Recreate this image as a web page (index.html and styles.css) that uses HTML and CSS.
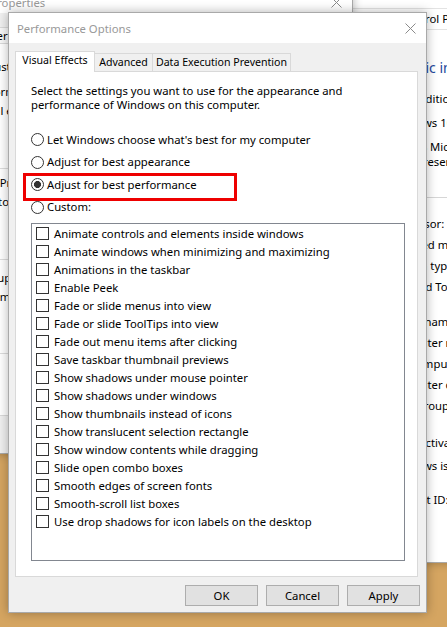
FILE: index.html
```html
<!DOCTYPE html>
<html lang="en">
  <head>
    <meta charset="UTF-8" />
    <title>Performance Options</title>
    <link rel="stylesheet" href="styles.css">
  </head>
  <body>
    <div class="desktop">

      <!-- Control Panel > System, furthest back -->
      <div class="window cpanel">
        <div class="titlebar"></div>
        <div class="address">Control Panel &gt; System and Security &gt; System</div>
        <div class="cp-content">
          <div class="cp-heading">View basic information about your computer</div>

          <div class="cp-group g-edition">
            <div class="cp-section">Windows edition</div>
            <div class="cp-row r-tight">Windows 10 Pro</div>
            <div class="cp-copy">© 2018 Microsoft Corporation. All<br>rights reserved.</div>
          </div>

          <div class="cp-group g-system">
            <div class="cp-section">System<span class="rule"></span></div>
            <div class="cp-row r-first">Processor:</div>
            <div class="cp-row">Installed memory (RAM):</div>
            <div class="cp-row">System type:</div>
            <div class="cp-row">Pen and Touch:</div>
          </div>

          <div class="cp-group g-name">
            <div class="cp-section">Computer name, domain, and workgroup settings</div>
            <div class="cp-row">Computer name:</div>
            <div class="cp-row">Full computer name:</div>
            <div class="cp-row">Computer description:</div>
            <div class="cp-row">Workgroup:</div>
          </div>

          <div class="cp-group g-activation">
            <div class="cp-section">Windows activation</div>
            <div class="cp-row r-tight">Windows is activated</div>
            <div class="cp-row r-gap">Product ID:</div>
          </div>
        </div>
      </div>

      <!-- System Properties -->
      <div class="window sysprops">
        <div class="titlebar">
          <span>System Properties</span>
          <svg class="close" width="11" height="11" viewBox="0 0 11 11">
            <path d="M0.5 0.5L10.5 10.5M10.5 0.5L0.5 10.5" stroke="#8a8a8a" stroke-width="1" fill="none" />
          </svg>
        </div>
        <div class="sp-body">
          <div class="sp-tabs">
            <span class="sp-tab">Computer Name</span>
            <span class="sp-tab">Hardware</span>
            <span class="sp-tab">Advanced</span>
          </div>
          <div class="sp-panel">
            <p class="sp-note">You must be logged on as an Administrator to make most of these changes.</p>
            <div class="sp-group g1">
              <span class="sp-label">Performance</span>
              <p>Visual effects, processor scheduling, memory usage, and virtual memory</p>
            </div>
            <div class="sp-group g2">
              <span class="sp-label">User Profiles</span>
              <p>Desktop settings related to your sign-in</p>
            </div>
            <div class="sp-group g3">
              <span class="sp-label">Startup and Recovery</span>
              <p>System startup, system failure, and debugging information</p>
            </div>
          </div>
        </div>
      </div>

      <!-- Performance Options dialog -->
      <div class="window dialog">
        <div class="titlebar">
          <span>Performance Options</span>
          <svg class="close" width="11" height="11" viewBox="0 0 11 11">
            <path d="M0.5 0.5L10.5 10.5M10.5 0.5L0.5 10.5" stroke="#8a8a8a" stroke-width="1" fill="none" />
          </svg>
        </div>

        <div class="dlg-body">
          <div class="tabs">
            <span class="tab active">Visual Effects</span>
            <span class="tab tab-adv">Advanced</span>
            <span class="tab tab-dep">Data Execution Prevention</span>
          </div>

          <div class="panel">
            <p class="intro">Select the settings you want to use for the appearance and<br>performance of Windows on this computer.</p>

            <div class="radios">
              <label class="radio"><span class="dot"></span>Let Windows choose what's best for my computer</label>
              <label class="radio"><span class="dot"></span>Adjust for best appearance</label>
              <label class="radio checked"><span class="dot"></span>Adjust for best performance<span class="mark"></span></label>
              <label class="radio"><span class="dot"></span>Custom:</label>
            </div>

            <div class="listbox">
              <label class="check"><span class="box"></span>Animate controls and elements inside windows</label>
              <label class="check"><span class="box"></span>Animate windows when minimizing and maximizing</label>
              <label class="check"><span class="box"></span>Animations in the taskbar</label>
              <label class="check"><span class="box"></span>Enable Peek</label>
              <label class="check"><span class="box"></span>Fade or slide menus into view</label>
              <label class="check"><span class="box"></span>Fade or slide ToolTips into view</label>
              <label class="check"><span class="box"></span>Fade out menu items after clicking</label>
              <label class="check"><span class="box"></span>Save taskbar thumbnail previews</label>
              <label class="check"><span class="box"></span>Show shadows under mouse pointer</label>
              <label class="check"><span class="box"></span>Show shadows under windows</label>
              <label class="check"><span class="box"></span>Show thumbnails instead of icons</label>
              <label class="check"><span class="box"></span>Show translucent selection rectangle</label>
              <label class="check"><span class="box"></span>Show window contents while dragging</label>
              <label class="check"><span class="box"></span>Slide open combo boxes</label>
              <label class="check"><span class="box"></span>Smooth edges of screen fonts</label>
              <label class="check"><span class="box"></span>Smooth-scroll list boxes</label>
              <label class="check"><span class="box"></span>Use drop shadows for icon labels on the desktop</label>
            </div>
          </div>

          <div class="buttons">
            <button class="btn">OK</button>
            <button class="btn">Cancel</button>
            <button class="btn">Apply</button>
          </div>
        </div>
      </div>

    </div>
  </body>
</html>
```

FILE: styles.css
```css
* {
  box-sizing: border-box;
}

body {
  margin: 0;
  background: #d5a561;
  font-family: "Noto Sans", "Open Sans", sans-serif;
  font-size: 11.3px;
  color: #000;
}

p {
  margin: 0;
}

.desktop {
  position: relative;
  width: 447px;
  height: 627px;
  overflow: hidden;
}

/* window frame shared by all three windows */
.window {
  position: absolute;
  display: flex;
  flex-direction: column;
  border: 1px solid #a9a9a9;
  box-shadow: 0 0 9px rgba(0, 0, 0, 0.28);
}

.titlebar {
  display: flex;
  align-items: center;
  flex: none;
  height: 30px;
  padding: 0 10px 0 8px;
  background: #fff;
  color: #999;
}

.titlebar .close {
  margin-left: auto;
}

/* ---- Control Panel (back) ---- */
.cpanel {
  left: 330px;
  top: -22px;
  width: 320px;
  height: 585px;
  background: #fff;
}

.cpanel .titlebar {
  border-bottom: 1px solid #e3e3e3;
}

.address {
  height: 21px;
  line-height: 20px;
  padding-left: 69px;
  border-bottom: 1px solid #e3e3e3;
  white-space: nowrap;
}

.cp-content {
  padding-left: 37px;
  white-space: nowrap;
}

.cp-heading {
  margin-top: 28px;
  font-size: 14px;
  line-height: 20px;
  color: #24479c;
}

.cp-section {
  display: flex;
  align-items: center;
  line-height: 21px;
}

.cp-section .rule {
  flex: 1;
  height: 1px;
  margin-left: 6px;
  background: #d6d6d6;
}

.cp-row {
  padding-left: 21px;
  line-height: 21px;
}

.cp-copy {
  margin-top: 6px;
  padding-left: 21px;
  line-height: 15px;
}

.g-edition { margin-top: 10px; }
.g-system { margin-top: 18px; }
.g-name { margin-top: 14px; }
.g-activation { margin-top: 16px; }

.r-tight { margin-top: 3px; }
.g-activation .r-tight { margin-top: 2px; }
.r-gap { margin-top: 13px; }
.r-first { margin-top: 5px; }

/* ---- System Properties (middle) ---- */
.sysprops {
  left: -60px;
  top: -18px;
  width: 413px;
  height: 472px;
  background: #f0f0f0;
}

.sysprops .titlebar {
  padding-top: 8px;
}

.sp-body {
  flex: 1;
  padding: 14px 6px 0;
}

.sp-tabs {
  display: flex;
  height: 16px;
}

.sp-tab {
  padding: 0 6px;
  line-height: 15px;
  white-space: nowrap;
  border: 1px solid #d9d9d9;
  border-bottom: none;
  background: #f8f8f8;
}

.sp-panel {
  height: 373px;
  padding: 15px 12px 0 13px;
  background: #fff;
  border: 1px solid #d9d9d9;
  white-space: nowrap;
}

.sp-note {
  line-height: 15px;
}

.sp-group {
  padding: 0 8px;
  border: 1px solid #dcdcdc;
}

.sp-group p {
  margin-top: 4px;
  padding-left: 2px;
  line-height: 15px;
}

.sp-label {
  display: block;
  width: max-content;
  margin-top: -8px;
  padding: 0 2px;
  line-height: 15px;
  background: #fff;
}

.g1 { margin-top: 17px; height: 78px; }
.g2 { margin-top: 13px; height: 78px; }
.g3 { margin-top: 17px; height: 77px; }

/* ---- Performance Options dialog ---- */
.dialog {
  left: 8px;
  top: 12px;
  width: 419px;
  height: 601px;
  background: #f0f0f0;
  box-shadow: 0 0 10px rgba(0, 0, 0, 0.3);
}

.dlg-body {
  flex: 1;
  padding: 8px 6px 0;
}

.tabs {
  display: flex;
  align-items: flex-end;
  height: 20px;
  position: relative;
  z-index: 1;
  font-size: 10.6px;
}

.tab {
  flex: none;
  height: 18px;
  line-height: 16px;
  margin-left: -1px;
  text-align: center;
  white-space: nowrap;
  border: 1px solid #d9d9d9;
  border-bottom: none;
  background: #f0f0f0;
}

.tab.active {
  height: 21px;
  width: 80px;
  margin-left: 0;
  margin-bottom: -1px;
  line-height: 17px;
  background: #fff;
  position: relative;
  z-index: 1;
}

.tab-adv { width: 59px; }
.tab-dep { width: 139px; }

.panel {
  height: 506px;
  margin-right: 2px;
  padding: 12px 12px 0 15px;
  background: #fff;
  border: 1px solid #d9d9d9;
}

.intro {
  line-height: 14px;
}

.radios {
  margin-top: 16px;
}

.radio {
  position: relative;
  display: flex;
  align-items: center;
  gap: 3px;
  height: 22.5px;
}

.dot {
  width: 13px;
  height: 13px;
  margin-top: 1px;
  border: 1px solid #333;
  border-radius: 50%;
  background: #fff;
  flex: none;
}

.radio.checked .dot {
  background: radial-gradient(circle, #333 0 3.2px, #fff 3.8px);
}

/* red outline drawn over the chosen option */
.mark {
  position: absolute;
  left: -8px;
  top: 0;
  width: 214px;
  height: 28px;
  border: 3px solid #ee0000;
}

.listbox {
  height: 338px;
  margin-top: 5px;
  padding: 0 0 0 4px;
  border: 1px solid #828790;
  background: #fff;
}

.check {
  display: flex;
  align-items: center;
  gap: 5px;
  height: 18px;
}

.box {
  width: 13px;
  height: 13px;
  margin-top: 1px;
  border: 1px solid #333;
  background: #fff;
  flex: none;
}

.buttons {
  display: flex;
  justify-content: flex-end;
  gap: 8px;
  margin-top: 8px;
}

.btn {
  width: 73px;
  height: 21px;
  padding: 0;
  font: inherit;
  color: #000;
  background: #e1e1e1;
  border: 1px solid #adadad;
}
```
